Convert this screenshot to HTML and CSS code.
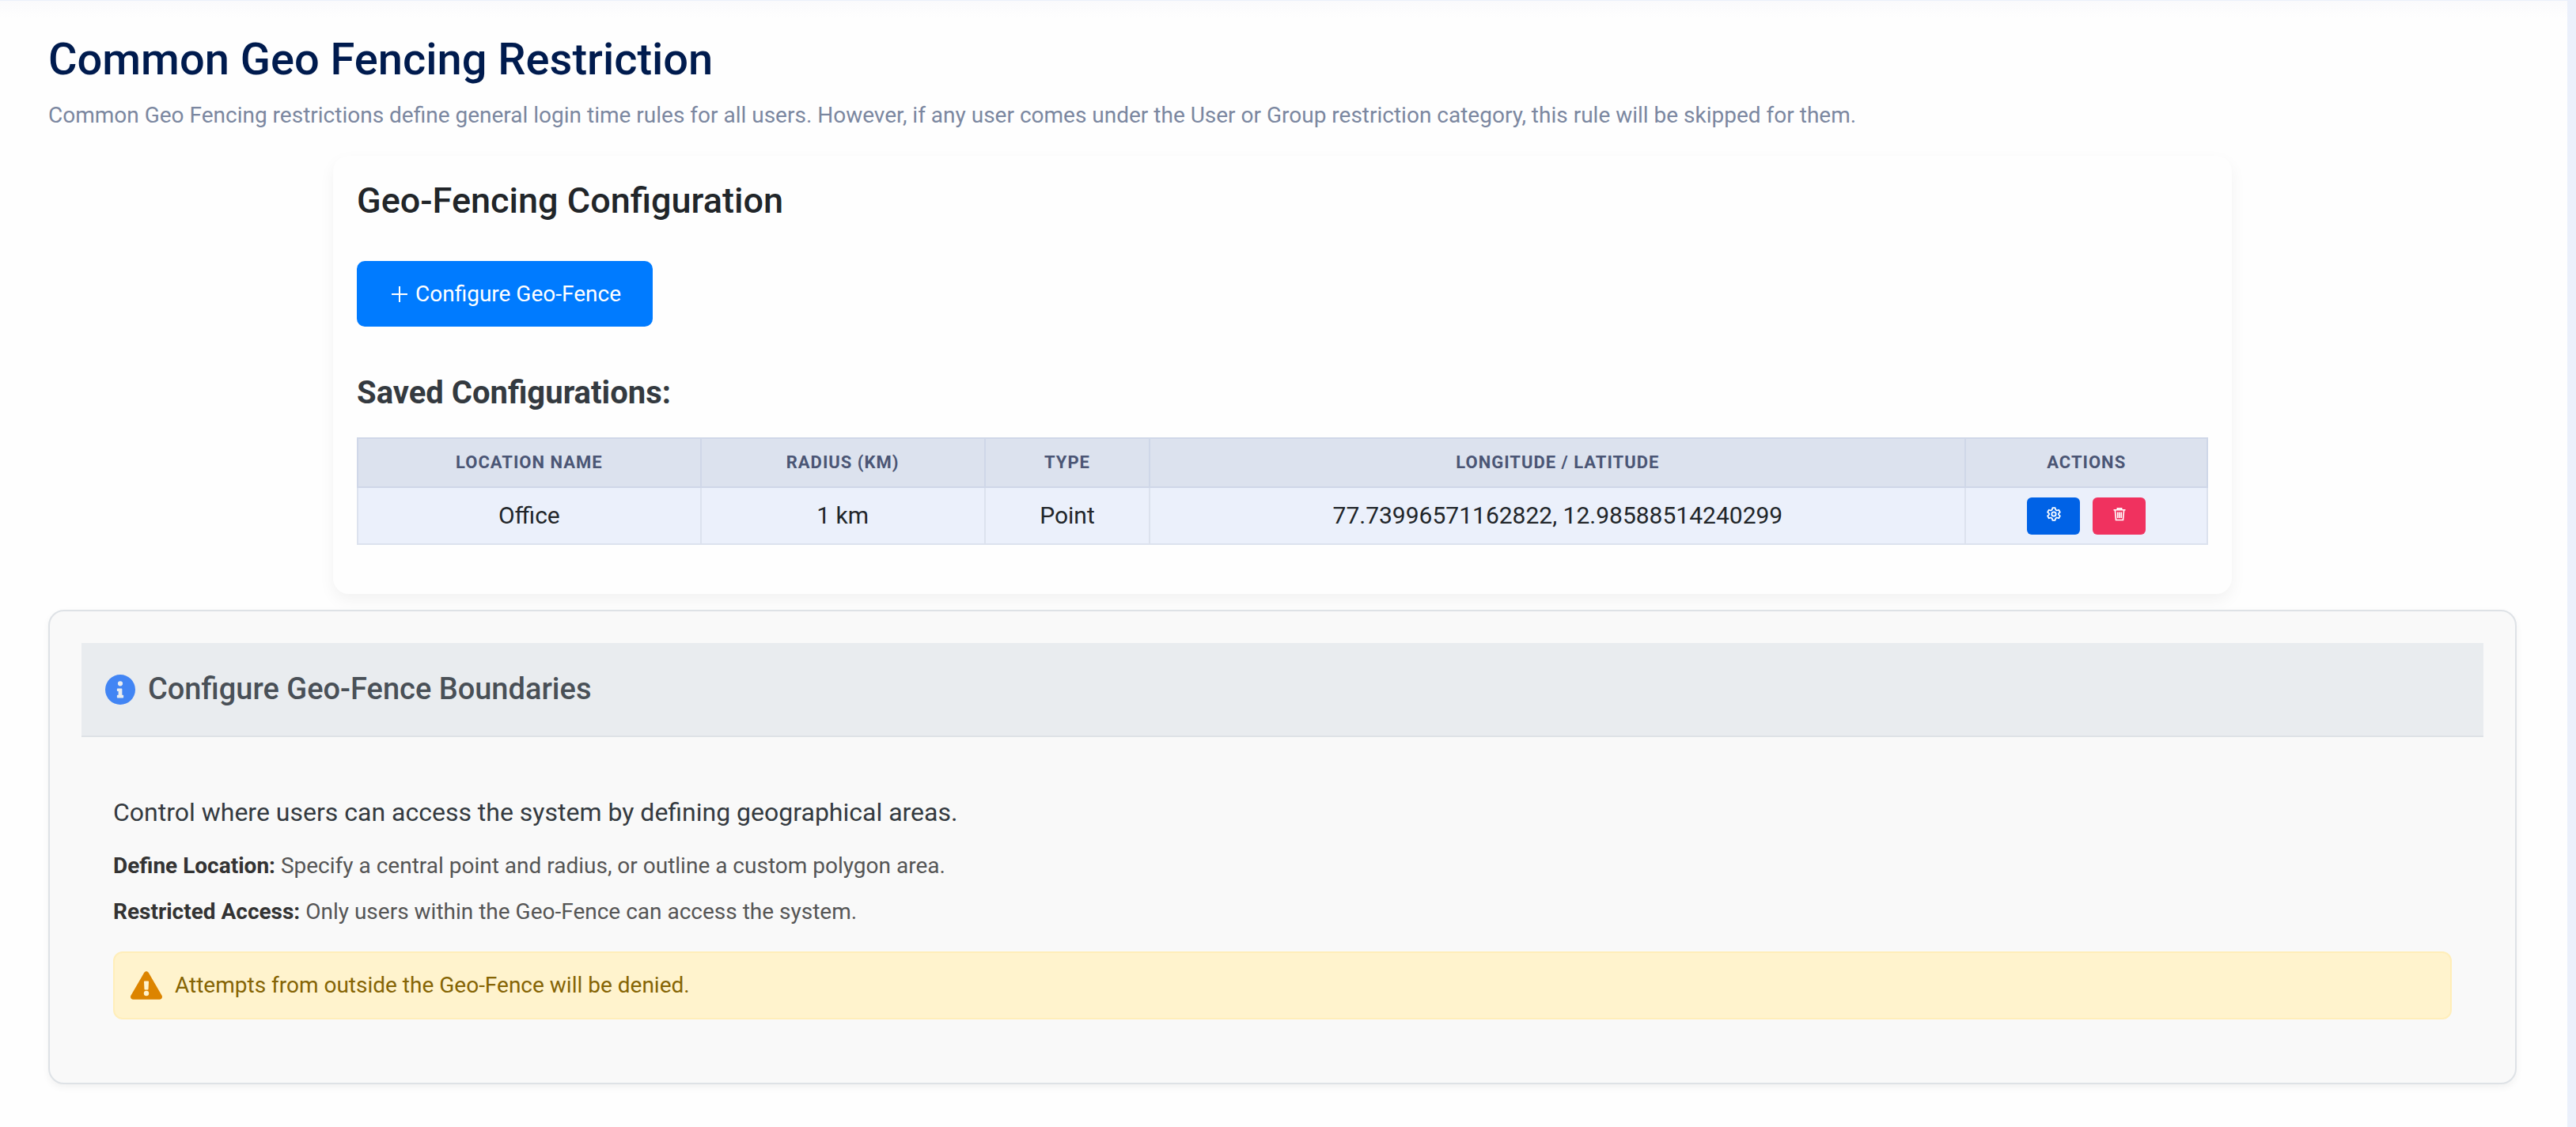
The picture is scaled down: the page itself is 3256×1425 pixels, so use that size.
FILE: index.html
```html
<!DOCTYPE html>
<html lang="en">
<head>
  <meta charset="UTF-8">
  <meta name="viewport" content="width=device-width, initial-scale=1.0">
  <title>Common Geo Fencing Restriction</title>
  <link rel="stylesheet" href="styles.css">
</head>
<body>
  <main class="page">
    <header class="page-header">
      <h1>Common Geo Fencing Restriction</h1>
      <p>Common Geo Fencing restrictions define general login time rules for all users. However, if any user comes under the User or Group restriction category, this rule will be skipped for them.</p>
    </header>

    <!-- Saved geo-fences -->
    <section class="config-card">
      <h2>Geo-Fencing Configuration</h2>
      <button type="button" class="btn-configure">
        <svg viewBox="0 0 20 20" aria-hidden="true"><path d="M10 0v20M0 10h20" stroke="currentColor" stroke-width="2" fill="none"/></svg>
        Configure Geo-Fence
      </button>

      <h3>Saved Configurations:</h3>
      <table class="config-table">
        <colgroup>
          <col class="col-name">
          <col class="col-radius">
          <col class="col-type">
          <col class="col-coords">
          <col class="col-actions">
        </colgroup>
        <thead>
          <tr>
            <th scope="col">Location Name</th>
            <th scope="col">Radius (km)</th>
            <th scope="col">Type</th>
            <th scope="col">Longitude / Latitude</th>
            <th scope="col">Actions</th>
          </tr>
        </thead>
        <tbody>
          <tr>
            <td>Office</td>
            <td>1 km</td>
            <td>Point</td>
            <td>77.73996571162822, 12.98588514240299</td>
            <td>
              <div class="actions">
                <button type="button" class="btn-icon btn-edit" aria-label="Edit">
                  <svg viewBox="0 0 24 24" fill="none" stroke="currentColor" stroke-width="2.4" stroke-linejoin="round" aria-hidden="true">
                    <path d="M9.8 1.5h4.4l.8 3.3 2 1.2 3.300-1 2.200 3.800-2.500 2.300v1.800l2.500 2.300-2.200 3.800-3.300-1-2 1.200-.8 3.300H9.800L9 19.200l-2-1.200-3.300 1-2.200-3.800L4 12.900v-1.800L1.500 8.800 3.700 5 7 6l2-1.200z"/>
                    <circle cx="12" cy="12" r="3.6"/>
                  </svg>
                </button>
                <button type="button" class="btn-icon btn-delete" aria-label="Delete">
                  <svg viewBox="0 0 24 24" fill="none" stroke="currentColor" stroke-width="2.2" aria-hidden="true">
                    <path d="M2 5h20M8.500 4.500V2.500h7v2M4.500 5l1.500 17h12l1.500-17M9 8.500v10M12 8.500v10M15 8.500v10"/>
                  </svg>
                </button>
              </div>
            </td>
          </tr>
        </tbody>
      </table>
    </section>

    <!-- Help panel -->
    <section class="info-panel">
      <div class="info-header">
        <svg viewBox="0 0 512 512" fill="currentColor" aria-hidden="true">
          <path fill-rule="evenodd" d="M256 0a256 256 0 1 0 0 512 256 256 0 0 0 0-512zm0 110a42 42 0 1 1 0 84 42 42 0 0 1 0-84zm56 274a12 12 0 0 1-12 12h-88a12 12 0 0 1-12-12v-24a12 12 0 0 1 12-12h12v-64h-12a12 12 0 0 1-12-12v-24a12 12 0 0 1 12-12h64a12 12 0 0 1 12 12v100h12a12 12 0 0 1 12 12z"/>
        </svg>
        <h2>Configure Geo-Fence Boundaries</h2>
      </div>
      <div class="info-body">
        <p class="lead">Control where users can access the system by defining geographical areas.</p>
        <p><strong>Define Location:</strong> Specify a central point and radius, or outline a custom polygon area.</p>
        <p><strong>Restricted Access:</strong> Only users within the Geo-Fence can access the system.</p>
        <div class="alert" role="alert">
          <svg viewBox="0 0 576 512" fill="currentColor" aria-hidden="true">
            <path fill-rule="evenodd" d="M569.5 440c18.5 32-4.7 72-41.600 72H48.100c-36.900 0-60-40.100-41.600-72L246.400 24c18.500-32 64.700-32 83.200 0zM288 354a46 46 0 1 0 0 92 46 46 0 0 0 0-92zm-43.700-165.300 7.400 136a12 12 0 0 0 12 11.300h48.500a12 12 0 0 0 12-11.300l7.400-136a12 12 0 0 0-12-12.700h-63.400a12 12 0 0 0-11.900 12.700z"/>
          </svg>
          <span>Attempts from outside the Geo-Fence will be denied.</span>
        </div>
      </div>
    </section>
  </main>
</body>
</html>
```

FILE: styles.css
```css
/* General Styles */
* {
  box-sizing: border-box;
}

body {
  margin: 0;
  padding: 1px 11px 0 0;
  font-family: Roboto, sans-serif;
  font-size: 28px;
  line-height: 42px;
  background-color: #ebf0fb;
  color: #212529;
}

h1,
h2,
h3,
p {
  margin: 0;
}

svg {
  flex: none;
}

.page {
  min-height: calc(100vh - 1px);
  padding: 40px 64px 54px 61px;
  background: linear-gradient(#fafafc, #fefefe 22px);
}

.page-header h1 {
  font-size: 56px;
  font-weight: 500;
  line-height: 68px;
  color: #001b4e;
}

.page-header p {
  margin-top: 16px;
  color: #7b87a0;
}

/* Configuration card */
.config-card {
  max-width: 2400px;
  margin: 30px auto 20px;
  padding: 30px 30px 62px;
  background-color: #fefefe;
  border-radius: 20px;
  box-shadow: 0 8px 20px rgba(0, 0, 0, 0.05);
}

.config-card h2 {
  font-size: 45px;
  font-weight: 500;
  line-height: 54px;
}

.config-card h3 {
  margin: 58px 0 30px;
  font-size: 40px;
  font-weight: 700;
  line-height: 52px;
  color: #343a40;
}

button {
  font-family: inherit;
  border: none;
  color: white;
  cursor: pointer;
}

.btn-configure {
  display: flex;
  align-items: center;
  gap: 10px;
  margin-top: 49px;
  padding: 20px 40px 20px 44px;
  font-size: 28px;
  line-height: 43px;
  background-color: #007bff;
  border-radius: 10px;
}

.btn-configure:hover {
  background-color: #0069d9;
}

.btn-configure svg {
  width: 20px;
  height: 20px;
}

.config-table {
  width: 100%;
  table-layout: fixed;
  border-collapse: collapse;
  text-align: center;
}

.col-name {
  width: 18.55%;
}

.col-radius {
  width: 15.35%;
}

.col-type {
  width: 8.93%;
}

.col-coords {
  width: 44.1%;
}

.config-table th {
  padding: 12px;
  font-size: 22px;
  font-weight: 700;
  line-height: 36px;
  letter-spacing: 1px;
  text-transform: uppercase;
  color: #4b5675;
  background-color: #dce2ee;
  border: 2px solid #cfd7e8;
}

.config-table td {
  padding: 11px 12px;
  font-size: 30px;
  line-height: 48px;
  background-color: #ebf0fb;
  border: 2px solid #dce2ee;
}

.actions {
  display: flex;
  justify-content: center;
  gap: 16px;
}

.btn-icon {
  display: flex;
  align-items: center;
  justify-content: center;
  width: 67px;
  height: 47px;
  padding: 0 0 4px;
  border-radius: 6px;
}

.btn-icon svg {
  width: 18px;
  height: 18px;
}

.btn-edit {
  background-color: #0062e6;
}

.btn-delete {
  background-color: #f0325f;
}

/* Help panel */
.info-panel {
  padding: 40px;
  background-color: #f9f9f9;
  border: 2px solid #dee2e6;
  border-radius: 20px;
  box-shadow: 0 4px 10px rgba(0, 0, 0, 0.05);
}

.info-header {
  display: flex;
  align-items: center;
  gap: 16px;
  padding: 30px;
  background-color: #e9ecef;
  border-bottom: 2px solid #dee2e6;
}

.info-header svg {
  width: 38px;
  height: 38px;
  color: #4285f4;
}

.info-header h2 {
  font-size: 38px;
  font-weight: 500;
  line-height: 57px;
  color: #495057;
}

.info-body {
  padding: 70px 40px 40px;
  color: #555;
}

.info-body p {
  margin-bottom: 16px;
}

.info-body .lead {
  margin-bottom: 22px;
  font-size: 32px;
  line-height: 50px;
  color: #343a40;
}

.info-body strong {
  color: #333;
}

.alert {
  display: flex;
  align-items: center;
  gap: 16px;
  margin-top: 29px;
  padding: 20px;
  color: #856404;
  background-color: #fff3cd;
  border: 2px solid #ffeeba;
  border-radius: 12px;
}

.alert svg {
  width: 40px;
  height: 36px;
  color: #dc8400;
}
```
